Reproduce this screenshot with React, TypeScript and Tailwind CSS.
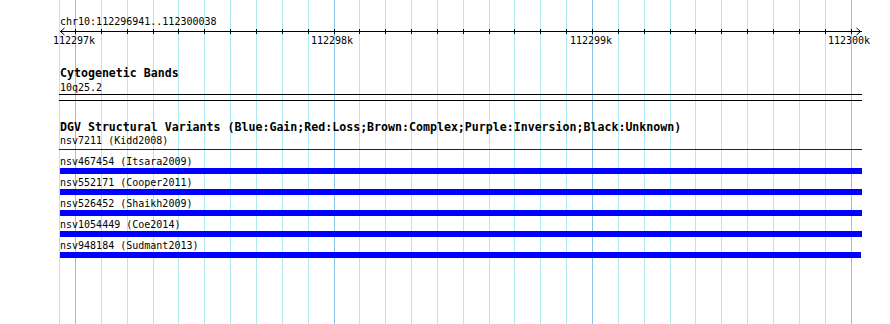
import React from "react";

const ORIGIN = 59;
const BP_PX = 25.85;
const FIRST = 75;

const ticks = Array.from({ length: 31 }, (_, k) => Math.round(FIRST + BP_PX * k));
const majors = [
  { x: 75, label: "112297k" },
  { x: 333, label: "112298k" },
  { x: 592, label: "112299k" },
  { x: 850, label: "112300k" },
];

const rows = [
  { id: "nsv467454", study: "Itsara2009", w: 802 },
  { id: "nsv552171", study: "Cooper2011", w: 802 },
  { id: "nsv526452", study: "Shaikh2009", w: 802 },
  { id: "nsv1054449", study: "Coe2014", w: 802 },
  { id: "nsv948184", study: "Sudmant2013", w: 801 },
];

export default function App() {
  return (
    <div className="relative w-[890px] h-[324px] bg-white overflow-hidden font-['DejaVu_Sans_Mono',monospace] text-black">
      {/* grid lines */}
      <div className="absolute inset-0">
        <div className="absolute top-0 bottom-0 w-px bg-[#aeeaf0]" style={{ left: ORIGIN }} />
        {ticks.map((x, k) => (
          <div
            key={x}
            className={`absolute top-0 bottom-0 w-px ${k % 10 === 0 ? "bg-[#8cc6e6]" : "bg-[#aeeaf0]"}`}
            style={{ left: x }}
          />
        ))}
      </div>

      <div className="relative ml-[59px] w-[803px] pt-[16px] flex flex-col">
        {/* ruler */}
        <div className="pl-px h-[11px] leading-[11px] text-[10px] whitespace-nowrap">chr10:112296941..112300038</div>
        <svg width="803" height="8" className="block overflow-visible">
          <rect x="1" y="4" width="802" height="1" fill="#000" />
          {ticks.map((x) => (
            <rect key={x} x={x - ORIGIN} y="2" width="1" height="5" fill="#000" />
          ))}
          <polyline points="5.5,1 1.5,4.5 5.5,8" fill="none" stroke="#000" strokeWidth="1" />
          <polyline points="797.5,1 801.5,4.5 797.5,8" fill="none" stroke="#000" strokeWidth="1" />
        </svg>
        <div className="relative h-[11px]">
          {majors.map((m) => (
            <div
              key={m.label}
              className="absolute top-0 w-[42px] text-center h-[11px] leading-[11px] text-[10px] whitespace-nowrap"
              style={{ left: m.x - ORIGIN - 22 }}
            >
              {m.label}
            </div>
          ))}
        </div>

        {/* Cytogenetic Bands */}
        <div className="mt-[21px] pl-px h-[13px] leading-[13px] text-[11.6px] font-bold whitespace-nowrap">Cytogenetic Bands</div>
        <div className="mt-[2px] pl-px h-[11px] leading-[11px] text-[10px]">10q25.2</div>
        <div className="mt-px h-px bg-black" />
        <div className="mt-[5px] h-px bg-black" />

        {/* DGV */}
        <div className="mt-[20px] pl-px h-[13px] leading-[13px] text-[11.6px] font-bold whitespace-nowrap">
          DGV Structural Variants (Blue:Gain;Red:Loss;Brown:Complex;Purple:Inversion;Black:Unknown)
        </div>
        <div className="mt-px flex flex-col">
          <div className="pl-px h-[11px] leading-[11px] text-[10px] whitespace-nowrap">nsv7211 (Kidd2008)</div>
          <div className="mt-px h-[6px] pt-[2px]">
            <div className="h-px bg-[#40085e]" />
          </div>
        </div>
        {rows.map((r) => (
          <div key={r.id} className="mt-[3px] flex flex-col">
            <div className="pl-px h-[11px] leading-[11px] text-[10px] whitespace-nowrap">
              {r.id} ({r.study})
            </div>
            <div className="mt-px ml-px h-[6px] bg-[#0000ff]" style={{ width: r.w }} />
          </div>
        ))}
      </div>
    </div>
  );
}
